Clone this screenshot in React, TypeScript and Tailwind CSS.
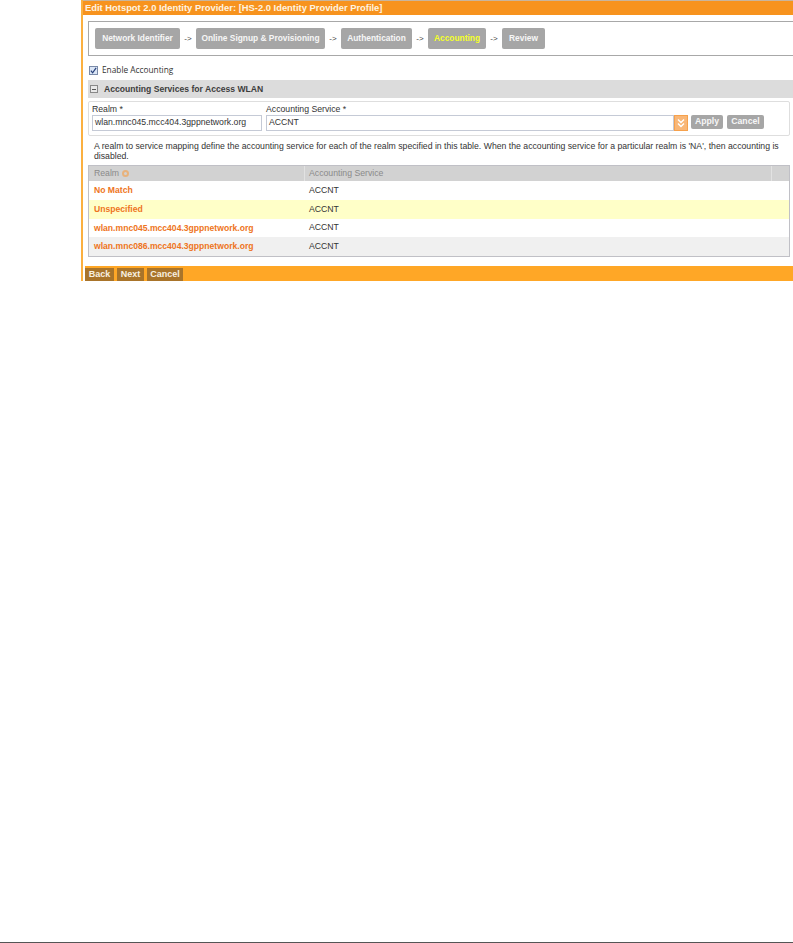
const font = "[font-family:'Liberation_Sans',Arial,sans-serif]"

const steps = [
    { label: "Network Identifier", width: "w-[85px]" },
    { label: "Online Signup & Provisioning", width: "w-[129px]" },
    { label: "Authentication", width: "w-[71px]" },
    { label: "Accounting", width: "w-[58px]", active: true },
    { label: "Review", width: "w-[43px]" },
]

const rows = [
    { realm: "No Match", bg: "bg-white", h: "h-[19px]" },
    { realm: "Unspecified", bg: "bg-[#ffffc8]", h: "h-[19px]" },
    { realm: "wlan.mnc045.mcc404.3gppnetwork.org", bg: "bg-white", h: "h-[18px]" },
    { realm: "wlan.mnc086.mcc404.3gppnetwork.org", bg: "bg-[#f0f0f0]", h: "h-[19px]" },
]

const App = () => {
    return (
        <div className={`flex min-h-[943px] flex-col bg-white ${font}`}>
            <div className="ml-[81px] flex h-[281px] flex-col border-l-2 border-[#fbb040]">
                <div className="flex h-[15px] items-center border-t border-[#c9b59c] bg-[#f7931e] pl-[2px] text-[9.4px] font-bold text-[#fff3e0]">
                    Edit Hotspot 2.0 Identity Provider: [HS-2.0 Identity Provider Profile]
                </div>

                <div className="ml-[5px] mt-[6px] flex h-[35px] items-center border-y border-l border-[#a8a8a8] pl-[6px] text-[8.4px] font-bold">
                    {steps.map((step, i) => (
                        <div key={step.label} className="flex items-center gap-[3px]">
                            {i > 0 && <span className="ml-[3px] w-[10px] text-center text-[8px] font-normal text-[#444]">-&gt;</span>}
                            <div className={`flex h-[21px] items-center justify-center rounded-[2px] bg-[#a6a6a6] ${step.width} ${step.active ? "text-[#f4ff2a]" : "text-[#f6f6f6]"}`}>
                                {step.label}
                            </div>
                        </div>
                    ))}
                </div>

                <div className="ml-[6px] mt-[9px] flex h-[11px] items-center gap-[4px] text-[8.3px] text-[#333] [font-family:'Open_Sans',sans-serif]">
                    <span className="flex h-[9px] w-[9px] items-center justify-center border border-[#7a8aa8] bg-[#dbe6f6]">
                        <svg viewBox="0 0 8 8" className="h-[7px] w-[7px]">
                            <path d="M1 4.2 3 6.6 7 1" fill="none" stroke="#27407a" strokeWidth="1.4" />
                        </svg>
                    </span>
                    Enable Accounting
                </div>

                <div className="ml-[5px] mt-[4px] flex h-[18px] items-center gap-[6px] bg-[#dcdcdc] pl-[2px] text-[8.6px] font-bold text-[#3c3c3c]">
                    <span className="flex h-[8px] w-[8px] items-center justify-center border border-[#888] bg-[#e8e8e8]">
                        <span className="h-px w-[4px] bg-[#555]" />
                    </span>
                    Accounting Services for Access WLAN
                </div>

                <div className="ml-[5px] mr-[3px] mt-[3px] flex h-[35px] items-end gap-[4px] rounded-[2px] border border-[#dedede] pb-[4px] pl-[3px] text-[8.7px] text-[#333]">
                    <div className="flex flex-col">
                        <span className="h-[9px] leading-[9px]">Realm *</span>
                        <div className="mt-[1px] flex h-[16px] w-[170px] items-center border border-[#c5cad6] pl-[2px] text-[#333]">wlan.mnc045.mcc404.3gppnetwork.org</div>
                    </div>
                    <div className="flex flex-col">
                        <span className="h-[9px] leading-[9px]">Accounting Service *</span>
                        <div className="mt-[1px] flex h-[16px] w-[408px] items-center border border-[#c5cad6] pl-[2px]">ACCNT</div>
                    </div>
                    <div className="-ml-[4px] flex h-[16px] w-[14px] items-center justify-center border border-[#f6a14c] bg-[#f9b777]">
                        <svg viewBox="0 0 10 10" className="h-[10px] w-[10px]">
                            <path d="M2 1.5 5 4.5 8 1.5M2 5.5 5 8.5 8 5.5" fill="none" stroke="#fff" strokeWidth="1.4" />
                        </svg>
                    </div>
                    <div className="-ml-px mb-[2px] flex h-[14px] items-center gap-[4px] font-bold text-[#f6f6f6]">
                        <span className="flex h-[14px] w-[32px] items-center justify-center rounded-[2px] bg-[#a6a6a6]">Apply</span>
                        <span className="flex h-[14px] w-[37px] items-center justify-center rounded-[2px] bg-[#a6a6a6]">Cancel</span>
                    </div>
                </div>

                <p className="ml-[11px] mr-[6px] mt-[5px] text-[8.7px] leading-[10px] text-[#333]">
                    A realm to service mapping define the accounting service for each of the realm specified in this table. When the accounting service for a particular realm is 'NA', then accounting is disabled.
                </p>

                <div className="ml-[5px] mr-[3px] mt-[4px] border border-[#c0c0c6] text-[8.7px]">
                    <div className="flex h-[15px] items-center bg-[#d2d2d2] text-[#8a8a8a]">
                        <div className="flex h-full w-[216px] items-center gap-[3px] border-r border-[#e2e2e2] pl-[5px]">
                            Realm
                            <span className="h-[7px] w-[7px] rounded-full border-2 border-[#e8b27c]" />
                        </div>
                        <div className="flex h-full flex-1 items-center border-r border-[#e2e2e2] pl-[4px]">Accounting Service</div>
                        <div className="w-[17px]" />
                    </div>
                    {rows.map((row) => (
                        <div key={row.realm} className={`flex items-center ${row.bg} ${row.h}`}>
                            <div className="w-[216px] pl-[5px] font-bold text-[#ee7422] text-[8.6px]">{row.realm}</div>
                            <div className="pl-[4px] text-[#333]">ACCNT</div>
                        </div>
                    ))}
                </div>

                <div className="ml-[2px] mt-[9px] flex h-[15px] items-end gap-[3px] bg-[#ffa726] text-[9px] font-bold text-[#f8f0e0]">
                    <span className="flex h-[13px] w-[29px] items-center justify-center bg-[#a9742a]">Back</span>
                    <span className="flex h-[13px] w-[27px] items-center justify-center bg-[#a9742a]">Next</span>
                    <span className="flex h-[13px] w-[36px] items-center justify-center bg-[#a9742a]">Cancel</span>
                </div>
            </div>

            <div className="mt-auto h-px bg-[#555]" />
        </div>
    )
}

export default App
